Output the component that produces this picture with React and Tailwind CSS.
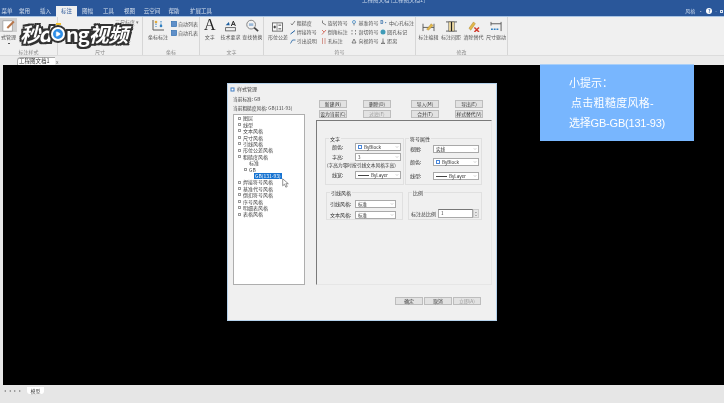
import { ChevronDown, ChevronUp, Play } from "lucide-react"

const cjk = "font-['Noto_Sans_CJK_SC','Noto_Sans',sans-serif]"

const tabs = [
  ["菜单", "w-[14px]"],
  ["常用", "w-[21px]"],
  ["插入", "w-[21px]"],
  ["标注", "w-[21px]"],
  ["图幅", "w-[21px]"],
  ["工具", "w-[21px]"],
  ["视图", "w-[21px]"],
  ["云空间", "w-[24px]"],
  ["帮助", "w-[20px]"],
  ["扩展工具", "w-[34px]"],
]

const treeItems = [
  ["图层", 0, true],
  ["线型", 0, true],
  ["文本风格", 0, true],
  ["尺寸风格", 0, true],
  ["引线风格", 0, true],
  ["形位公差风格", 0, true],
  ["粗糙度风格", 0, true],
  ["标准", 1, false],
  ["GB", 1, true],
  ["GB(131-93)", 2, false],
  ["焊接符号风格", 0, true],
  ["基准代号风格", 0, true],
  ["倒扣符号风格", 0, true],
  ["序号风格", 0, true],
  ["明细表风格", 0, true],
  ["表格风格", 0, true],
]

function Glyph({ children, className = "w-[6px] h-[6px]" }) {
  return (
    <svg viewBox="0 0 12 12" className={className + " shrink-0"} fill="none" strokeWidth="1.4">
      {children}
    </svg>
  )
}

function SmallItem({ icon, label, className = "" }) {
  return (
    <div className={"flex items-center gap-[1px] h-[9px] text-[5px] text-[#555] whitespace-nowrap " + className}>
      {icon}
      <span>{label}</span>
    </div>
  )
}

function BigItem({ icon, label, className = "" }) {
  return (
    <div className={"flex flex-col items-center text-[5px] text-[#555] whitespace-nowrap " + className}>
      <div className="h-[15px] flex items-end justify-center">{icon}</div>
      <span className="mt-[1px] leading-[7px]">{label}</span>
    </div>
  )
}

function RibbonGroup({ label, className, children }) {
  return (
    <div className={"relative flex flex-col border-r border-[#d6d6d6] h-[38px] " + className}>
      <div className="flex flex-1 min-h-0">{children}</div>
      <div className="h-[7px] leading-[7px] text-center text-[5px] text-[#888]">{label}</div>
    </div>
  )
}

function Button({ children, className = "" }) {
  return (
    <div className={"w-[28px] h-[8px] bg-[#e2e2e2] border border-[#bdbdbd] text-[4.8px] leading-[6px] text-center text-[#333] whitespace-nowrap " + className}>
      {children}
    </div>
  )
}

function Select({ className = "", children }) {
  return (
    <div className={"h-[8px] bg-white border border-[#a9a9a9] flex items-center pl-[2px] pr-[1px] text-[4.5px] text-[#333] whitespace-nowrap " + className}>
      <div className="flex-1 flex items-center gap-[2px]">{children}</div>
      <ChevronDown className="w-[4px] h-[4px] text-[#777]" strokeWidth={2} />
    </div>
  )
}

function Swatch() {
  return <span className="w-[4px] h-[4px] bg-white border border-[#4a86d8]" />
}

function LineMark() {
  return <span className="w-[11px] h-px bg-[#444]" />
}

function Field({ label, labelClass, children }) {
  return (
    <div className="flex items-center">
      <span className={"text-[5px] text-[#333] whitespace-nowrap " + labelClass}>{label}</span>
      {children}
    </div>
  )
}

function Group({ title, className, children }) {
  return (
    <div className={"relative border border-[#e0e0e0] " + className}>
      <span className="absolute left-[3px] top-[-4px] px-px bg-[#f0f0f0] text-[5px] leading-[7px] text-[#333] whitespace-nowrap">{title}</span>
      {children}
    </div>
  )
}

function StyleDialog() {
  return (
    <div className={"absolute left-[224px] top-[18px] w-[270px] h-[238px] bg-[#f0f0f0] border border-[#b5d2ec] flex flex-col pl-[5px] pr-[4px] " + cjk}>
      <div className="h-[10px] flex items-center gap-[2px] -ml-[3px] text-[5px] text-[#444]">
        <svg viewBox="0 0 10 10" className="w-[5px] h-[5px]">
          <rect x="1" y="1" width="8" height="8" fill="#3f7cc4" />
          <rect x="3" y="3" width="4" height="4" fill="#fff" />
        </svg>
        <span>样式管理</span>
      </div>

      <div className="flex gap-[11px] h-[191px]">
        <div className="w-[72px] flex flex-col">
          <div className="h-[9px] mt-[1px] leading-[9px] text-[4.7px] text-[#444] whitespace-nowrap">当前标准: GB</div>
          <div className="h-[9px] leading-[9px] text-[4.7px] text-[#444] whitespace-nowrap">当前粗糙度风格: GB(131-93)</div>
          <div className="mt-[1px] h-[171px] bg-white border border-[#aeaeae] pl-[4px]">
            {treeItems.map(([name, level, expandable]) => (
              <div key={name} className="h-[6.4px] flex items-center text-[5px] text-[#444] whitespace-nowrap">
                {level === 0 && <span className="w-[3px] h-[3px] border border-[#9a9a9a] mr-[2px]" />}
                {level === 1 && <span className={"w-[3px] h-[3px] ml-[6px] mr-[2px] " + (expandable ? "border border-[#9a9a9a]" : "")} />}
                {level === 2 && <span className="ml-[16px] px-px h-[6px] leading-[6px] bg-[#1673d1] text-white">{name}</span>}
                {level !== 2 && <span>{name}</span>}
              </div>
            ))}
          </div>
        </div>

        <div className="flex-1 flex flex-col pt-[6px]">
          <div className="flex pl-[3px]">
            <Button>新建(N)</Button>
            <Button className="ml-[16px]">删除(D)</Button>
            <Button className="ml-[20px]">导入(M)</Button>
            <Button className="ml-[16px]">导出(E)</Button>
          </div>
          <div className="flex pl-[3px] mt-[2px]">
            <Button>设为当前(C)</Button>
            <Button className="ml-[16px] text-[#999] bg-[#d6d6d6]">过滤(F)</Button>
            <Button className="ml-[20px]">合并(T)</Button>
            <Button className="ml-[16px]">样式替代(V)</Button>
          </div>

          <div className="mt-[2px] h-[165px] border-l border-t border-[#7a7a7a] border-r-[#e6e6e6] border-b-[#e6e6e6] border-r border-b pt-[17px]">
            <div className="flex ml-[8px] gap-[1px]">
              <Group title="文字" className="w-[79px] h-[47px] pt-[4px] pl-[6px] pr-[2px]">
                <Field label="颜色:" labelClass="w-[23px]">
                  <Select className="w-[46px]"><Swatch />ByBlock</Select>
                </Field>
                <div className="mt-[2px]">
                  <Field label="字高:" labelClass="w-[23px]">
                    <Select className="w-[46px]">3</Select>
                  </Field>
                </div>
                <div className="-ml-[5px] h-[6px] mt-[1px] leading-[6px] text-[4.7px] text-[#333] whitespace-nowrap">(字高为零时按引线文本风格字高)</div>
                <div className="mt-[3px]">
                  <Field label="线宽:" labelClass="w-[23px]">
                    <Select className="w-[46px]"><LineMark />ByLayer</Select>
                  </Field>
                </div>
              </Group>
              <Group title="符号属性" className="w-[77px] h-[47px] pt-[6px] pl-[4px]">
                <Field label="视图:" labelClass="w-[23px]">
                  <Select className="w-[46px]">实线</Select>
                </Field>
                <div className="mt-[5px]">
                  <Field label="颜色:" labelClass="w-[23px]">
                    <Select className="w-[46px]"><Swatch />ByBlock</Select>
                  </Field>
                </div>
                <div className="mt-[6px]">
                  <Field label="线型:" labelClass="w-[23px]">
                    <Select className="w-[46px]"><LineMark />ByLayer</Select>
                  </Field>
                </div>
              </Group>
            </div>
            <div className="flex ml-[9px] mt-[7px] gap-[5px]">
              <Group title="引线风格" className="w-[77px] h-[28px] pt-[7px] pl-[3px]">
                <Field label="引线风格:" labelClass="w-[25px]">
                  <Select className="w-[41px]">标准</Select>
                </Field>
                <div className="mt-[3px]">
                  <Field label="文本风格:" labelClass="w-[25px]">
                    <Select className="w-[41px]">标准</Select>
                  </Field>
                </div>
              </Group>
              <Group title="比例" className="w-[74px] h-[28px] pt-[16px] pl-[2px]">
                <Field label="标注总比例" labelClass="w-[27px]">
                  <div className="w-[35px] h-[9px] bg-white border border-[#a9a9a9] border-t-[#777] pl-[2px] text-[4.5px] leading-[7px] text-[#333]">1</div>
                  <div className="w-[6px] h-[9px] flex flex-col items-center justify-center bg-[#e8e8e8] border border-[#ccc]">
                    <ChevronUp className="w-[4px] h-[3px] text-[#333]" strokeWidth={3} />
                    <ChevronDown className="w-[4px] h-[3px] text-[#333]" strokeWidth={3} />
                  </div>
                </Field>
              </Group>
            </div>
          </div>
        </div>
      </div>

      <div className="flex justify-end gap-px mt-[12px] pr-[11px]">
        <Button className="border-[#3d7fc4]">确定</Button>
        <Button>取消</Button>
        <Button className="text-[#999] bg-[#d6d6d6]">立即(A)</Button>
      </div>
    </div>
  )
}

function Logo() {
  const outline =
    "[text-shadow:2px_0_0_#333,-2px_0_0_#333,0_2px_0_#333,0_-2px_0_#333,2px_2px_0_#333,-2px_-2px_0_#333,2px_-2px_0_#333,-2px_2px_0_#333]"
  return (
    <div className={"absolute left-[20px] top-[22px] h-[24px] flex items-center text-white italic font-bold text-[20px] leading-[24px] whitespace-nowrap " + cjk + " " + outline}>
      <span className="tracking-[-1.5px]">秒d</span>
      <span className="relative w-[14px] h-[14px] mx-[1px] rounded-full bg-[#2f8fe8] border-2 border-white flex items-center justify-center shadow-[0_0_0_2px_#333]">
        <Play className="w-[6px] h-[6px] text-white fill-white" />
        <span className="absolute -top-[6px] left-[3px] w-[5px] h-[3px] border-t-2 border-[#f2c230]" />
      </span>
      <span className="not-italic tracking-[-1px]">ng</span>
      <span className="tracking-[-0.5px]">视频</span>
    </div>
  )
}

function Ribbon() {
  return (
    <div className="h-[39px] bg-[#f0f0f0] border-b border-[#dcdcdc] flex overflow-hidden">
      <RibbonGroup label="标注样式" className="w-[58px]">
        <div className="w-[17px] h-[27px] flex flex-col items-center">
          <div className="w-full h-[14px] mt-[1px] bg-[#cfcfcf] flex items-center justify-center">
            <svg viewBox="0 0 14 14" className="w-[13px] h-[13px]">
              <rect x="1" y="2" width="10" height="11" fill="#fff" stroke="#888" strokeWidth=".6" />
              <path d="M5 9 L12 2 L13.5 3.5 L6.5 10.5 Z" fill="#b8764a" />
            </svg>
          </div>
          <span className="text-[5px] leading-[7px] mt-[1px] text-[#555] whitespace-nowrap">式管理</span>
          <span className="w-[2px] h-[1px] bg-[#555] mt-[3px]" />
        </div>
      </RibbonGroup>

      <RibbonGroup label="尺寸" className="w-[85px]">
        <div className="ml-auto mr-[3px] mt-[1px] text-[5px] text-[#777]">
          <div className="h-[8px] leading-[8px] whitespace-nowrap">三尺标度 ▾</div>
          <div className="h-[8px] leading-[8px] pl-[6px]">角度</div>
          <div className="h-[8px] leading-[8px] pl-[6px]">长度</div>
        </div>
      </RibbonGroup>

      <RibbonGroup label="坐标" className="w-[57px]">
        <BigItem
          className="w-[26px] ml-[2px]"
          label="坐标标注"
          icon={
            <svg viewBox="0 0 16 14" className="w-[16px] h-[14px]" fill="none" strokeWidth="1">
              <path d="M3 12 H14 M3 12 V2" stroke="#5a5a5a" />
              <path d="M6 3 V9 M11 3 V9" stroke="#2f7fc1" strokeDasharray="1.5 1" />
              <circle cx="6" cy="4" r="1.3" fill="#e0a93b" />
              <circle cx="11" cy="8" r="1.3" fill="#2f7fc1" />
            </svg>
          }
        />
        <div className="pt-[2px]">
          <SmallItem
            label="自动列表"
            icon={<Glyph className="w-[6px] h-[6px]"><rect x="1" y="1" width="10" height="10" fill="#5f8fc9" stroke="#2f6fb0" /></Glyph>}
          />
          <SmallItem
            label="自动孔表"
            icon={<Glyph className="w-[6px] h-[6px]"><rect x="1" y="1" width="10" height="10" fill="#5f8fc9" stroke="#2f6fb0" /></Glyph>}
          />
        </div>
      </RibbonGroup>

      <RibbonGroup label="文字" className="w-[64px]">
        <BigItem
          className="w-[20px]"
          label="文字"
          icon={<span className="font-['Liberation_Serif',serif] text-[16px] leading-[15px] text-[#222]">A</span>}
        />
        <BigItem
          className="w-[22px]"
          label="技术要求"
          icon={
            <svg viewBox="0 0 16 14" className="w-[13px] h-[12px]" fill="none">
              <path d="M2 6 L6 2 L7 6" fill="#1f5f9f" />
              <path d="M9 7 L11.5 1 L14 7 M10 5 H13" stroke="#222" strokeWidth="1.2" />
              <rect x="2" y="9" width="12" height="4" stroke="#555" />
            </svg>
          }
        />
        <BigItem
          className="w-[22px]"
          label="查找替换"
          icon={
            <svg viewBox="0 0 16 14" className="w-[14px] h-[13px]" fill="none">
              <circle cx="7" cy="6" r="5" stroke="#777" />
              <path d="M10.5 9.5 L15 13.5" stroke="#444" strokeWidth="2" />
              <rect x="4.5" y="4.5" width="5" height="3" fill="#9ab8d8" />
            </svg>
          }
        />
      </RibbonGroup>

      <RibbonGroup label="符号" className="w-[152px]">
        <BigItem
          className="w-[24px] ml-[2px]"
          label="形位公差"
          icon={
            <svg viewBox="0 0 12 10" className="w-[11px] h-[10px]" fill="none">
              <rect x=".5" y=".5" width="11" height="9" stroke="#666" fill="#fafafa" />
              <path d="M5.5 1 V9" stroke="#888" />
              <path d="M1.5 5 H4.5 M3 3.5 V6.5" stroke="#222" />
              <path d="M7 3 H10 M7 7 H10" stroke="#444" />
            </svg>
          }
        />
        <div className="w-[31px] pt-[1px]">
          <SmallItem label="粗糙度" icon={<Glyph><path d="M2 7 L4 10 L10 2" stroke="#555" /></Glyph>} />
          <SmallItem label="焊接符号" icon={<Glyph><path d="M1 10 L10 3" stroke="#1f5f9f" strokeWidth="2" /></Glyph>} />
          <SmallItem label="引出说明" icon={<Glyph><path d="M1 11 L5 4 H11" stroke="#1f5f9f" strokeWidth="1.6" /></Glyph>} />
        </div>
        <div className="w-[31px] pt-[1px]">
          <SmallItem label="旋转符号" icon={<Glyph><path d="M3 1 V6 M3 6 L10 10" stroke="#555" /></Glyph>} />
          <SmallItem label="倒角标注" icon={<Glyph><path d="M2 2 L6 6 M10 2 L2 11" stroke="#c8402f" /></Glyph>} />
          <SmallItem label="孔标注" icon={<Glyph><path d="M2 2 H4 M7 2 H9 M2 6 H4 M7 6 H9 M2 10 H4 M7 10 H9" stroke="#b8402f" strokeWidth="2.2" /></Glyph>} />
        </div>
        <div className="w-[29px] pt-[1px]">
          <SmallItem label="基准符号" icon={<Glyph><circle cx="6" cy="4" r="3" stroke="#2f7fc1" /><path d="M6 7 V11" stroke="#555" /></Glyph>} />
          <SmallItem label="剖切符号" icon={<Glyph><path d="M2 2 V5 M9 2 V5 M2 8 V11 M9 8 V11" stroke="#555" /></Glyph>} />
          <SmallItem label="向视符号" icon={<Glyph><path d="M6 2 L10 10 H2 Z" stroke="#555" /></Glyph>} />
        </div>
        <div className="w-[35px] pt-[1px]">
          <SmallItem label="中心孔标注" icon={<span className="text-[4.5px] text-[#1f5f9f] font-bold">D•</span>} />
          <SmallItem label="圆孔标记" icon={<Glyph><circle cx="6" cy="6" r="5" fill="#3f9bb8" /></Glyph>} />
          <SmallItem label="距离" icon={<Glyph><path d="M6 1 V7 M2 11 H10 M6 7 L3 11 M6 7 L9 11" stroke="#555" /></Glyph>} />
        </div>
      </RibbonGroup>

      <RibbonGroup label="修改" className="w-[92px]">
        <BigItem
          className="w-[23px] ml-[1px]"
          label="标注编辑"
          icon={
            <svg viewBox="0 0 14 12" className="w-[13px] h-[11px]" fill="none">
              <path d="M1 3 V11 M13 3 V11 M1 7 H13" stroke="#555" />
              <path d="M5 9 L10 3 L12 5 L7 10 Z" fill="#e2b84a" stroke="#a87f2a" strokeWidth=".5" />
            </svg>
          }
        />
        <BigItem
          className="w-[22px]"
          label="标注间距"
          icon={
            <svg viewBox="0 0 14 12" className="w-[13px] h-[11px]" fill="none">
              <path d="M1 1 H13 M1 11 H13" stroke="#555" />
              <rect x="4" y="1" width="6" height="10" fill="#edd9a0" stroke="#555" strokeWidth=".6" />
              <path d="M7 1 V11" stroke="#222" strokeWidth="1.3" />
            </svg>
          }
        />
        <BigItem
          className="w-[23px]"
          label="清除替代"
          icon={
            <svg viewBox="0 0 14 12" className="w-[13px] h-[11px]" fill="none">
              <path d="M2 8 L7 1 L9 3 L4 10 Z" fill="#e2b84a" stroke="#a87f2a" strokeWidth=".5" />
              <path d="M8 7 L13 12 M13 7 L8 12" stroke="#d0392b" strokeWidth="1.6" />
            </svg>
          }
        />
        <BigItem
          className="w-[22px]"
          label="尺寸驱动"
          icon={
            <svg viewBox="0 0 14 12" className="w-[13px] h-[11px]" fill="none">
              <path d="M1 3 H12 M1 1 V5 M12 1 V11" stroke="#555" />
              <path d="M1 9 H10" stroke="#2f7fc1" strokeWidth="1.4" strokeDasharray="2 1" />
            </svg>
          }
        />
      </RibbonGroup>
    </div>
  )
}

function App() {
  return (
    <div className={"relative w-[724px] h-[403px] overflow-hidden flex flex-col bg-[#e8e8e8] blur-[0.4px] " + cjk}>
      {/* title bar + tabs */}
      <header className="h-[17px] bg-[#2a579a] border-b border-[#a8c4e4] relative">
        <div className="absolute left-[362px] -top-[3px] text-[5.5px] leading-[7px] text-[#c7d6ea] whitespace-nowrap">工程图文档 [工程图文档1]</div>
        <div className="flex pt-[6px]">
          {tabs.map(([name, w]) => (
            <div
              key={name}
              className={
                w + " h-[11px] text-center text-[5.5px] leading-[10px] " +
                (name === "标注" ? "bg-[#f0f0f0] text-[#2a579a]" : "text-[#d6e0ee]")
              }
            >
              {name}
            </div>
          ))}
          <div className="ml-auto mr-px flex items-center gap-[3px] text-[5px] text-[#c7d6ea] h-[10px]">
            <span>风格</span>
            <span>·</span>
            <span className="w-[6px] h-[6px] rounded-full bg-white text-[#2a579a] text-[5px] leading-[6px] text-center font-bold">?</span>
            <span>-</span>
            <span className="w-[3px] h-[3px] border border-[#d6e0ee]" />
          </div>
        </div>
      </header>

      <Ribbon />

      {/* doc tabs */}
      <div className="h-[9px] bg-[#ebebeb] flex items-end pl-[17px]">
        <div className="w-[38px] h-[8px] bg-white border-t border-l border-[#aaa] rounded-tl-[4px] text-[5.5px] leading-[7px] pl-[1px] text-[#333] whitespace-nowrap">工程图文档1</div>
        <span className="ml-[1px] text-[5px] leading-[7px] text-[#666]">x</span>
      </div>

      {/* canvas */}
      <main className="relative h-[320px] ml-[3px] bg-black">
        <StyleDialog />
        <svg viewBox="0 0 10 14" className="absolute left-[279px] top-[113px] w-[7px] h-[10px]">
          <path d="M1 1 V11 L3.5 8.7 L5.5 13 L7.5 12 L5.5 8 H9 Z" fill="#fff" stroke="#666" strokeWidth="1" />
        </svg>
        <div className="absolute left-[537px] -top-px w-[154px] h-[77px] bg-[#78b6fe] border-t border-[#a9cff8] pt-[8px] text-white text-[11px] leading-[20px] font-['Liberation_Sans','Noto_Sans_CJK_SC',sans-serif] whitespace-nowrap">
          <div className="pl-[29px]">小提示：</div>
          <div className="pl-[31px] tracking-[0.3px]">点击粗糙度风格-</div>
          <div className="pl-[29px] tracking-[-0.2px]">选择GB-GB(131-93)</div>
        </div>
      </main>

      {/* sheet tabs */}
      <footer className="flex-1 bg-[#e6e6e6] flex items-start pl-[4px] pt-[2px]">
        <div className="flex gap-[3px] pt-[1px] text-[4px] leading-[4px] text-[#888]">
          <span>◂</span>
          <span>◂</span>
          <span>▸</span>
          <span>▸</span>
        </div>
        <div className="ml-[6px] w-[17px] h-[7px] bg-white rounded-b-[3px] text-center text-[5px] leading-[7px] text-[#444]">模型</div>
      </footer>

      <Logo />
    </div>
  )
}

export default App
